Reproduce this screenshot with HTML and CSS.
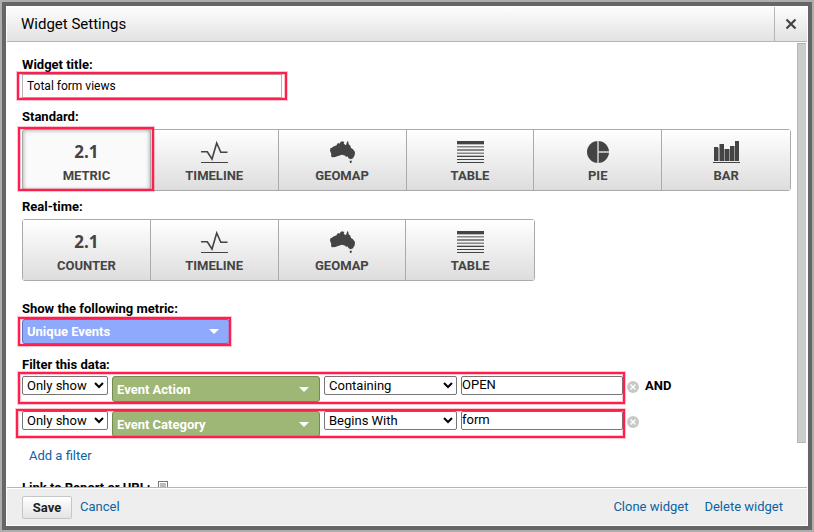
FILE: index.html
```html
<!DOCTYPE html>
<html lang="en">
<head>
<meta charset="utf-8">
<title>Widget Settings</title>
<link rel="stylesheet" href="styles.css">
</head>
<body>
<svg class="sprite" aria-hidden="true">
  <symbol id="timeline" viewBox="0 0 28 24">
    <path d="M1 11.8H7.3L12 19 16.7 3 20.8 12.3H27.5" fill="none" stroke="#444" stroke-width="1.6"/>
    <path d="M1 22h27v1H1z" fill="#444"/>
  </symbol>
  <symbol id="geomap" viewBox="24 30 84 72">
    <path fill="#444" d="M31 55L34 54 42 49 50 46 51 42 55 39 58 41 62 36 66 34 73 36 71 41 78 46 82 33 85 36 86 43 91 47 93 54 99 58 105 66 104 76 99 85 92 88 86 85 82 79 78 81 76 77 66 74 54 78 46 81 36 82 33 78 34 72 30 62zM89 92H96L94 99H90z"/>
  </symbol>
  <symbol id="table" viewBox="0 0 28 24">
    <path fill="#444" d="M1 1h27v3H1zM1 16h27v1H1zM1 19h27v1H1zM1 22h27v1H1z"/>
    <path fill="#bbb" d="M1 4h27v1H1zM1 7h27v1H1zM1 12h27v1H1zM1 15h27v1H1z"/>
    <path fill="#888" d="M1 6h27v1H1zM1 9h27v2H1zM1 13h27v1H1z"/>
  </symbol>
  <symbol id="pie" viewBox="0 0 28 24">
    <circle cx="14" cy="12" r="11" fill="#444"/>
    <path d="M14 1v22M14 12h11" stroke="#ddd" stroke-width="1.4"/>
  </symbol>
  <symbol id="bar" viewBox="0 0 28 24">
    <path fill="#444" d="M2 7h4v14H2zM7 4h5v17H7zM13 9h4v12h-4zM18 6h4v15h-4zM23 1h4v20h-4zM1 22h27v1H1z"/>
    <path fill="#999" d="M6 8h1v13H6zM12 9h1v12h-1zM17 9h1v12h-1zM22 6h1v15h-1zM7 4h1v17H7z"/>
  </symbol>
  <symbol id="remove" viewBox="0 0 12 12">
    <circle cx="6" cy="6" r="6" fill="#c8c8c8"/>
    <path d="M3.5 3.5l5 5M8.5 3.5l-5 5" stroke="#fff" stroke-width="1.4"/>
  </symbol>
</svg>
<main class="dialog">
  <header class="dialog-header">
    <h1>Widget Settings</h1>
    <button class="close" aria-label="Close">
      <svg width="12" height="12" viewBox="0 0 12 12"><path d="M1.5 1.5l9 9M10.5 1.5l-9 9" stroke="#444" stroke-width="2.2"/></svg>
    </button>
  </header>
  <div class="dialog-body">
    <form class="settings">
      <section class="group">
        <label class="caption" for="title">Widget title:</label>
        <div class="title-field mark mark-title"><input id="title" class="title-input" value="Total form views"></div>
      </section>
      <section class="group types">
        <h2 class="caption">Standard:</h2>
        <div class="cards">
          <button type="button" class="card selected mark mark-card"><span class="number">2.1</span>METRIC</button>
          <button type="button" class="card"><svg class="icon"><use href="#timeline"/></svg>TIMELINE</button>
          <button type="button" class="card"><svg class="icon"><use href="#geomap"/></svg>GEOMAP</button>
          <button type="button" class="card"><svg class="icon"><use href="#table"/></svg>TABLE</button>
          <button type="button" class="card"><svg class="icon"><use href="#pie"/></svg>PIE</button>
          <button type="button" class="card"><svg class="icon"><use href="#bar"/></svg>BAR</button>
        </div>
      </section>
      <section class="group types realtime">
        <h2 class="caption">Real-time:</h2>
        <div class="cards four">
          <button type="button" class="card"><span class="number">2.1</span>COUNTER</button>
          <button type="button" class="card"><svg class="icon"><use href="#timeline"/></svg>TIMELINE</button>
          <button type="button" class="card"><svg class="icon"><use href="#geomap"/></svg>GEOMAP</button>
          <button type="button" class="card"><svg class="icon"><use href="#table"/></svg>TABLE</button>
        </div>
      </section>
      <section class="group metric">
        <h2 class="caption">Show the following metric:</h2>
        <div class="metric-field mark mark-metric"><button type="button" class="picker blue">Unique Events</button></div>
      </section>
      <section class="group filters">
        <h2 class="caption">Filter this data:</h2>
        <div class="filter">
          <div class="rule mark mark-rule">
            <select class="show" aria-label="Filter mode"><option>Only show</option></select>
            <button type="button" class="picker green">Event Action</button>
            <select class="match" aria-label="Match type"><option>Containing</option></select>
            <input class="value" aria-label="Value" value="OPEN">
          </div>
          <button type="button" class="remove" aria-label="Remove filter"><svg width="12" height="12"><use href="#remove"/></svg></button>
          <strong class="and">AND</strong>
        </div>
        <div class="filter">
          <div class="rule mark mark-rule last">
            <select class="show" aria-label="Filter mode"><option>Only show</option></select>
            <button type="button" class="picker green">Event Category</button>
            <select class="match" aria-label="Match type"><option>Begins With</option></select>
            <input class="value" aria-label="Value" value="form">
          </div>
          <button type="button" class="remove" aria-label="Remove filter"><svg width="12" height="12"><use href="#remove"/></svg></button>
        </div>
        <a class="add" href="#">Add a filter</a>
      </section>
      <section class="link-row">
        <label class="caption" for="link">Link to Report or URL:</label>
        <button type="button" id="link" class="link-icon" aria-label="Choose report"></button>
      </section>
    </form>
    <div class="scrollbar"></div>
  </div>
  <footer class="dialog-footer">
    <button class="save">Save</button>
    <a href="#">Cancel</a>
    <a class="clone" href="#">Clone widget</a>
    <a href="#">Delete widget</a>
  </footer>
</main>
</body>
</html>
```
FILE: styles.css
```css
* { box-sizing: border-box; }
body {
  margin: 0;
  height: 100vh;
  padding: 2px;
  background: #adadad;
  font: 13px/16px Roboto, "Liberation Sans", sans-serif;
  color: #000;
}
button, input, select { font-family: inherit; margin: 0; }
h1, h2 { margin: 0; }
a { color: #0c62a3; text-decoration: none; }
.sprite { display: none; }

.dialog {
  height: 100%;
  display: flex;
  flex-direction: column;
  border: 4px solid #666;
  padding: 1px;
  background: #fff;
  overflow: hidden;
}
.dialog-header {
  flex: none;
  display: flex;
  height: 35px;
  border-bottom: 1px solid #b5b5b5;
  background: linear-gradient(#fdfdfd, #e2e2e2);
}
.dialog-header h1 {
  flex: 1;
  padding-left: 14px;
  font-size: 15px;
  font-weight: 400;
  line-height: 34px;
}
.close {
  width: 33px;
  padding: 0;
  border: 0;
  border-left: 1px solid #b5b5b5;
  background: none;
  display: grid;
  place-items: center;
}

.dialog-body {
  flex: 1;
  min-height: 0;
  display: flex;
  margin-top: 1px;
  padding-right: 1px;
  border-bottom: 1px solid #b5b5b5;
  overflow: hidden;
}
.settings { flex: 1; min-width: 0; padding: 14px 6px 0 15px; }
.scrollbar {
  width: 9px;
  height: 90%;
  background: #ccc;
  border: 1px solid #b5b5b5;
  border-right: 0;
}
.caption { display: block; font-size: 13px; font-weight: 700; line-height: 16px; }
.group { margin-bottom: 12px; }

.mark { position: relative; }
.mark::after {
  content: "";
  position: absolute;
  z-index: 1;
  border: 2px solid #ff1f4f;
  box-shadow: 0 0 0 1px #ff1f4f44, inset 0 0 0 1px #ff1f4f44;
  pointer-events: none;
}
.mark-title::after { inset: -2px -4px -2px -5px; }
.mark-card::after { inset: -3px -4px -1px -5px; }
.mark-metric::after { inset: -2px -2px -2px -4px; }
.mark-rule::after { inset: -4px -2px -2px -4px; }
.mark-rule.last::after { inset: -2px -2px -1px -6px; }

.title-field { width: 261px; margin-top: 1px; }
.title-input {
  display: block;
  width: 260px;
  height: 24px;
  padding: 0 4px;
  border: 1px solid #b5b5b5;
  font-size: 12px;
}

.types { margin-top: -1px; margin-bottom: 9px; }
.cards {
  display: grid;
  grid-template-columns: repeat(6, 1fr);
  margin-top: 4px;
  border: 1px solid #aaa;
  border-radius: 3px;
}
.cards.four { grid-template-columns: repeat(4, 1fr); width: 513px; }
.card {
  display: flex;
  flex-direction: column;
  align-items: center;
  height: 60px;
  padding: 10px 0 0;
  border: 0;
  background: linear-gradient(#fff, #ddd);
  color: #444;
  font-size: 13px;
  font-weight: 700;
  line-height: 24px;
}
.card:not(:last-child) { border-right: 1px solid #aaa; }
.card.selected { background: #fafafa; box-shadow: inset 0 0 4px #999; }
.icon { width: 28px; height: 24px; flex: none; }
.number { font: 700 17px/24px "Open Sans", "Noto Sans", sans-serif; }
.types.realtime { margin-bottom: 20px; }

.metric-field { width: 207px; margin-top: 2px; }
.picker {
  display: flex;
  align-items: center;
  justify-content: space-between;
  width: 208px;
  height: 26px;
  padding: 0 10px 0 4px;
  border: 1px solid;
  border-radius: 3px;
  color: #fff;
  font-size: 13px;
  font-weight: 700;
}
.picker::after {
  content: "";
  border: 5px solid transparent;
  border-top-color: #fff;
  border-bottom: 0;
}
.blue { height: 25px; background: #8faafd; border-color: #6074bd; }
.green { background: #9eb676; border-color: #738b4e; }
.metric { margin-bottom: 13px; }

.filters .caption { margin-bottom: 3px; }
.filter { display: flex; align-items: flex-start; height: 35px; }
.rule { display: flex; align-items: flex-start; gap: 4px; }
.rule select {
  height: 19px;
  padding: 0;
  border: 1px solid #767676;
  border-radius: 2px;
  background: #fff;
  color: #000;
  font-size: 13px;
}
.show { width: 86px; }
.rule .match { width: 133px; }
.value {
  width: 162px;
  height: 19px;
  padding: 0 0 2px;
  border: 1px solid #767676;
  border-radius: 2px;
  font-size: 13px;
}
.remove { margin: 5px 6px 0 4px; padding: 0; border: 0; background: none; line-height: 0; }
.and { line-height: 19px; }
.add { display: block; margin-left: 7px; line-height: 20px; }

.link-row { display: flex; gap: 8px; margin-top: 14px; }
.link-icon { width: 10px; height: 12px; margin-top: 1px; padding: 0; border: 1px solid #777; background: #bbb; box-shadow: inset 0 0 0 1px #fff; }

.dialog-footer {
  flex: none;
  display: flex;
  align-items: center;
  gap: 8px;
  height: 36px;
  margin-top: 1px;
  padding: 0 24px 0 15px;
  background: #eee;
}
.save {
  width: 50px;
  height: 23px;
  padding: 0;
  border: 1px solid #c6c6c6;
  border-radius: 2px;
  background: linear-gradient(#fff, #e4e4e4);
  color: #222;
  font-size: 13px;
  font-weight: 700;
}
.clone { margin: 0 8px 0 auto; }
```
